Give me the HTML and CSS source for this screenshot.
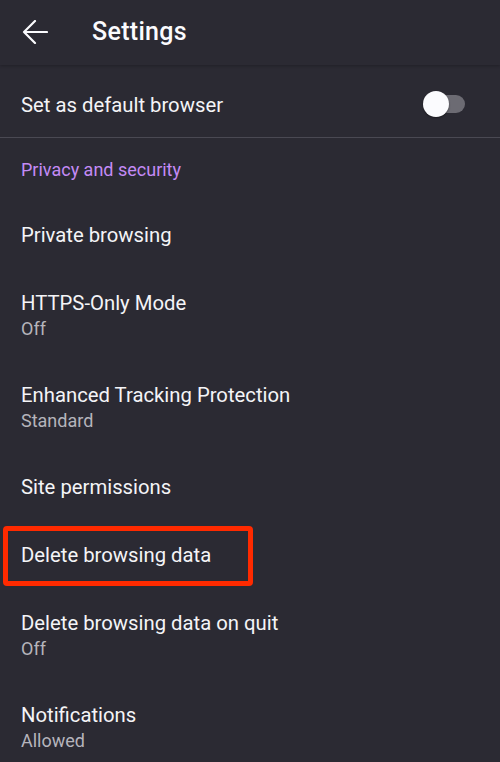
FILE: index.html
```html
<!DOCTYPE html>
<html>
<head>
<meta charset="utf-8">
<link rel="stylesheet" href="styles.css">
</head>
<body>
<header class="appbar">
  <svg class="back" width="26" height="24" viewBox="0 0 26 24"><path d="M25 12H2M13 1L2 12l11 11" fill="none" stroke="#fbfbfe" stroke-width="2.2" stroke-linecap="round" stroke-linejoin="round"/></svg>
  <h1 class="title">Settings</h1>
</header>
<main>
  <div class="row default-row">
    <span class="label">Set as default browser</span>
    <span class="toggle"><span class="knob"></span></span>
  </div>
  <div class="category">Privacy and security</div>
  <div class="row"><span class="label">Private browsing</span></div>
  <div class="row two"><span class="label">HTTPS-Only Mode</span><span class="sub">Off</span></div>
  <div class="row two"><span class="label">Enhanced Tracking Protection</span><span class="sub">Standard</span></div>
  <div class="row"><span class="label">Site permissions</span></div>
  <div class="row highlighted"><span class="label">Delete browsing data</span><span class="mark"></span></div>
  <div class="row two"><span class="label">Delete browsing data on quit</span><span class="sub">Off</span></div>
  <div class="row two"><span class="label">Notifications</span><span class="sub">Allowed</span></div>
</main>
</body>
</html>
```
FILE: styles.css
```css
html, body {
  margin: 0;
  padding: 0;
  background: #2b2a33;
  font-family: Roboto, "Noto Sans", sans-serif;
  color: #fbfbfe;
  overflow: hidden;
}
.appbar {
  height: 65px;
  display: flex;
  align-items: center;
  padding-left: 22px;
  background: #2b2a33;
  box-shadow: 0 1px 3px rgba(0,0,0,0.25);
  position: relative;
  z-index: 1;
}
.back {
  display: block;
  margin-top: -2px;
}
.title {
  margin: -2px 0 0 44px;
  font-size: 25px;
  font-weight: 500;
  letter-spacing: 0.3px;
}
.row {
  display: flex;
  flex-direction: column;
  justify-content: center;
  padding: 21px 21px;
  position: relative;
}
.label {
  font-size: 20.3px;
  line-height: 26px;
  color: #f4f4f7;
}
.sub {
  font-size: 18px;
  line-height: 25px;
  color: #b5b4bc;
}
.default-row {
  flex-direction: row;
  justify-content: space-between;
  align-items: center;
  padding-top: 27px;
  padding-bottom: 19px;
  border-bottom: 1px solid #4a4953;
}
.toggle {
  position: relative;
  width: 40px;
  height: 18px;
  border-radius: 9px;
  background: #6c6b73;
  margin-right: 14px;
  margin-top: -2px;
}
.knob {
  position: absolute;
  left: -2px;
  top: -4px;
  width: 26px;
  height: 26px;
  border-radius: 50%;
  background: #fbfbfe;
  box-shadow: 0 1px 2px rgba(0,0,0,0.4);
}
.category {
  padding: 21px 21px 20px;
  font-size: 18px;
  line-height: 22px;
  color: #c48bf6;
}
.two {
  padding-bottom: 20px;
}
.mark {
  position: absolute;
  left: 3px;
  top: 5px;
  width: 240px;
  height: 50px;
  border: 5px solid #ff2a00;
  border-radius: 4px;
}
```
